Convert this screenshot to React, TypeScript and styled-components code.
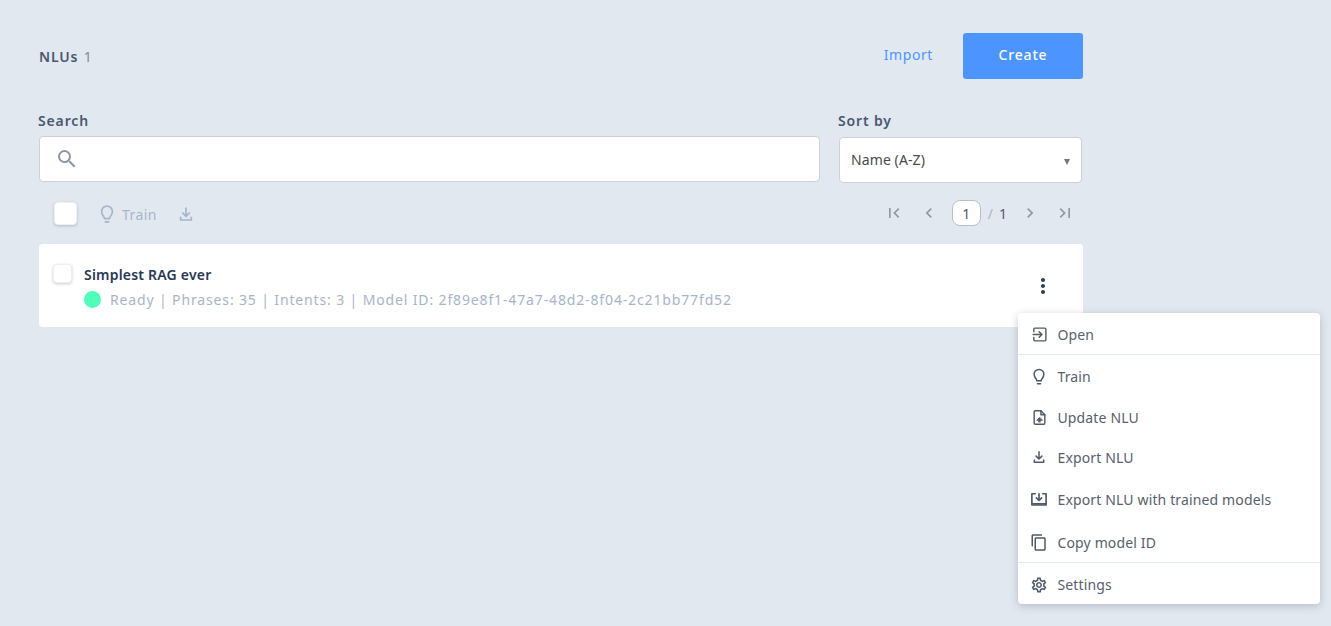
import styled, { createGlobalStyle } from "styled-components";
import {
  MdChevronLeft,
  MdChevronRight,
  MdContentCopy,
  MdFirstPage,
  MdLastPage,
  MdMoreVert,
  MdOutlineSettings,
  MdSearch,
} from "react-icons/md";

const GlobalStyle = createGlobalStyle`
  html, body {
    margin: 0;
    padding: 0;
    background: #e2e8f0;
    font-family: "Noto Sans", "Open Sans", sans-serif;
  }
  * {
    box-sizing: border-box;
  }
`;

const Page = styled.div`
  position: relative;
  width: 1331px;
  height: 626px;
  overflow: hidden;
  padding: 33px 0 0 39px;
  background: #e2e8f0;
`;

const Content = styled.div`
  width: 1044px;
  display: flex;
  flex-direction: column;
`;

const Header = styled.div`
  display: flex;
  align-items: center;
  justify-content: space-between;
  height: 46px;
`;

const Title = styled.div`
  font-size: 14px;
  font-weight: 600;
  letter-spacing: 0.85px;
  color: #4a5870;
  margin-top: 1px;
  span {
    font-weight: 400;
    color: #808a99;
    margin-left: 1px;
  }
`;

const HeaderActions = styled.div`
  display: flex;
  align-items: center;
  gap: 30px;
`;

const ImportLink = styled.a`
  font-size: 14px;
  letter-spacing: 0.6px;
  color: #4c94ff;
  margin-bottom: 4px;
`;

const CreateButton = styled.button`
  width: 120px;
  height: 46px;
  padding: 0 0 4px;
  border: none;
  border-radius: 3px;
  background: #4c94ff;
  color: #fff;
  font-family: inherit;
  font-size: 14px;
  font-weight: 500;
  letter-spacing: 0.8px;
`;

const Filters = styled.div`
  display: flex;
  gap: 19px;
  margin-top: 32px;
`;

const Field = styled.div<{ $width: number }>`
  width: ${(p) => p.$width}px;
  display: flex;
  flex-direction: column;
`;

const Label = styled.label`
  font-size: 14px;
  font-weight: 600;
  letter-spacing: 0.85px;
  line-height: 20px;
  height: 25px;
  margin-left: -1px;
  color: #4a5870;
`;

const SearchBox = styled.div`
  height: 46px;
  display: flex;
  align-items: center;
  padding-left: 15px;
  background: #fff;
  border: 1px solid #cbd0da;
  border-radius: 4px;
  color: #8c96a8;
  svg {
    width: 24px;
    height: 24px;
  }
`;

const SortBox = styled.div`
  height: 46px;
  margin-top: 1px;
  padding: 0 11px 2px 11px;
  display: flex;
  align-items: center;
  justify-content: space-between;
  background: #fff;
  border: 1px solid #cbd0da;
  border-radius: 4px;
  font-size: 14px;
  letter-spacing: 0.1px;
  color: #4a4a4a;
`;

const Caret = styled.span`
  width: 0;
  height: 0;
  margin-top: 5px;
  border-left: 3px solid transparent;
  border-right: 3px solid transparent;
  border-top: 6px solid #777;
`;

const Toolbar = styled.div`
  height: 26px;
  margin-top: 17px;
  display: flex;
  align-items: center;
  justify-content: space-between;
`;

const BulkActions = styled.div`
  display: flex;
  align-items: center;
  padding-left: 15px;
  color: #a8b4cc;
`;

const Checkbox = styled.span<{ $size: number }>`
  display: block;
  flex: none;
  width: ${(p) => p.$size}px;
  height: ${(p) => p.$size}px;
  background: #fff;
  border-radius: 4px;
  border: 1px solid #edf0f4;
  box-shadow: 0 1px 3px rgba(45, 55, 72, 0.25);
`;

const TrainAction = styled.div`
  display: flex;
  align-items: center;
  gap: 5px;
  margin-left: 20px;
  margin-top: 2px;
  font-size: 14px;
  letter-spacing: 0.4px;
  svg {
    width: 20px;
    height: 20px;
  }
`;

const DownloadAction = styled.span`
  display: flex;
  margin-left: 21px;
  margin-top: 2px;
  svg {
    width: 16px;
    height: 16px;
  }
`;

const Pager = styled.div`
  display: flex;
  align-items: center;
  padding-right: 8px;
  color: #8f99aa;
  svg {
    width: 20px;
    height: 20px;
  }
`;

const PagerIcon = styled.span<{ $gap: number }>`
  display: flex;
  margin-left: ${(p) => p.$gap}px;
`;

const PageInput = styled.span`
  width: 29px;
  height: 26px;
  margin-left: 13px;
  display: flex;
  align-items: center;
  justify-content: center;
  background: #fff;
  border: 1px solid #b6bfcc;
  border-radius: 8px;
  font-size: 14px;
  color: #4a5870;
`;

const PageTotal = styled.span`
  margin-left: 7px;
  font-size: 14px;
  color: #4a5870;
  i {
    font-style: normal;
    color: #a8b4cc;
    margin-right: 6px;
  }
`;

const Card = styled.div`
  position: relative;
  height: 83px;
  margin-top: 18px;
  padding: 20px 14px 0;
  display: flex;
  background: #fff;
  border-radius: 4px;
`;

const CardBody = styled.div`
  margin-left: 12px;
  padding-top: 1px;
  display: flex;
  flex-direction: column;
`;

const CardTitle = styled.div`
  font-size: 14px;
  font-weight: 600;
  line-height: 20px;
  letter-spacing: 0.2px;
  color: #2a3855;
`;

const CardMeta = styled.div`
  display: flex;
  align-items: center;
  gap: 9px;
  margin-top: 5px;
  font-size: 14px;
  line-height: 20px;
  letter-spacing: 0.86px;
  color: #a8b4cc;
`;

const StatusDot = styled.span`
  width: 17px;
  height: 17px;
  margin-top: -2px;
  border-radius: 50%;
  background: #4dffb8;
`;

const MoreButton = styled.span`
  position: absolute;
  top: 30px;
  right: 28px;
  display: flex;
  color: #2a3a5a;
  svg {
    width: 24px;
    height: 24px;
  }
`;

const Menu = styled.div`
  position: absolute;
  left: 1018px;
  top: 313px;
  width: 302px;
  height: 291px;
  background: #fff;
  border-radius: 4px;
  box-shadow: 0 2px 8px rgba(74, 85, 104, 0.3);
  display: flex;
  flex-direction: column;
`;

const MenuItem = styled.div<{ $height: number; $nudge?: number }>`
  height: ${(p) => p.$height}px;
  padding: ${(p) => p.$nudge ?? 0}px 0 0 12px;
  display: flex;
  align-items: center;
  gap: 9.5px;
  font-size: 14px;
  letter-spacing: 0.14px;
  color: #56616c;
`;

const MenuIcon = styled.span<{ $size: number }>`
  flex: none;
  width: 18px;
  display: flex;
  justify-content: center;
  color: #4f5b67;
  svg {
    width: ${(p) => p.$size}px;
    height: ${(p) => p.$size}px;
  }
`;

const MenuDivider = styled.div`
  height: 1px;
  flex: none;
  background: #e2e8f0;
`;

const strokeProps = {
  fill: "none",
  stroke: "currentColor",
  strokeWidth: 2,
  strokeLinecap: "round" as const,
  strokeLinejoin: "round" as const,
  viewBox: "0 0 24 24",
};

const BulbIcon = () => (
  <svg {...strokeProps}>
    <path d="M9 17.5h6M10 21.500h4" />
    <path d="M9 17c0-2-3.500-3.600-3.500-8A6.500 6.500 0 0 1 12 2.500 6.500 6.500 0 0 1 18.500 9c0 4.400-3.500 6-3.500 8" />
  </svg>
);

const DownloadIcon = () => (
  <svg {...strokeProps} strokeWidth={2.6}>
    <path d="M12 3v12M7 10.500l5 5 5-5M4 17v4h16v-4" />
  </svg>
);

const OpenIcon = () => (
  <svg {...strokeProps}>
    <path d="M4 8V4.500A1.500 1.500 0 0 1 5.500 3h14A1.500 1.500 0 0 1 21 4.500v15a1.500 1.500 0 0 1-1.500 1.500h-14A1.500 1.500 0 0 1 4 19.500V16" />
    <path d="M3 12h12M11.500 8l4 4-4 4" />
  </svg>
);

const FileUpIcon = () => (
  <svg {...strokeProps}>
    <path d="M14 2.500H6A1.500 1.500 0 0 0 4.500 4v16A1.500 1.500 0 0 0 6 21.500h12a1.500 1.500 0 0 0 1.500-1.500V8z" />
    <path d="M14 2.500V8h5.500" />
    <path d="M12 12l-4 4h2.800v2.500h2.400V16H16z" fill="currentColor" strokeWidth={1} />
  </svg>
);

const TrayDownIcon = () => (
  <svg {...strokeProps} strokeWidth={2.2}>
    <path d="M7 5H2.500v15h19V5H17" />
    <path d="M2.500 18.500h19" />
    <path d="M12 5v9M8.500 10.500l3.500 3.500 3.500-3.500" />
  </svg>
);

export default function App() {
  return (
    <Page>
      <GlobalStyle />
      <Content>
        <Header>
          <Title>
            NLUs <span>1</span>
          </Title>
          <HeaderActions>
            <ImportLink>Import</ImportLink>
            <CreateButton>Create</CreateButton>
          </HeaderActions>
        </Header>
        <Filters>
          <Field $width={781}>
            <Label>Search</Label>
            <SearchBox>
              <MdSearch />
            </SearchBox>
          </Field>
          <Field $width={243}>
            <Label>Sort by</Label>
            <SortBox>
              Name (A-Z)
              <Caret />
            </SortBox>
          </Field>
        </Filters>
        <Toolbar>
          <BulkActions>
            <Checkbox $size={23} />
            <TrainAction>
              <BulbIcon />
              Train
            </TrainAction>
            <DownloadAction>
              <DownloadIcon />
            </DownloadAction>
          </BulkActions>
          <Pager>
            <PagerIcon $gap={0}>
              <MdFirstPage />
            </PagerIcon>
            <PagerIcon $gap={15}>
              <MdChevronLeft />
            </PagerIcon>
            <PageInput>1</PageInput>
            <PageTotal>
              <i>/</i>1
            </PageTotal>
            <PagerIcon $gap={13}>
              <MdChevronRight />
            </PagerIcon>
            <PagerIcon $gap={15}>
              <MdLastPage />
            </PagerIcon>
          </Pager>
        </Toolbar>
        <Card>
          <Checkbox $size={19} />
          <CardBody>
            <CardTitle>Simplest RAG ever</CardTitle>
            <CardMeta>
              <StatusDot />
              Ready | Phrases: 35 | Intents: 3 | Model ID: 2f89e8f1-47a7-48d2-8f04-2c21bb77fd52
            </CardMeta>
          </CardBody>
          <MoreButton>
            <MdMoreVert />
          </MoreButton>
        </Card>
      </Content>
      <Menu>
        <MenuItem $height={41} $nudge={2}>
          <MenuIcon $size={17}>
            <OpenIcon />
          </MenuIcon>
          Open
        </MenuItem>
        <MenuDivider />
        <MenuItem $height={42}>
          <MenuIcon $size={19}>
            <BulbIcon />
          </MenuIcon>
          Train
        </MenuItem>
        <MenuItem $height={41}>
          <MenuIcon $size={17}>
            <FileUpIcon />
          </MenuIcon>
          Update NLU
        </MenuItem>
        <MenuItem $height={38}>
          <MenuIcon $size={14}>
            <DownloadIcon />
          </MenuIcon>
          Export NLU
        </MenuItem>
        <MenuItem $height={46}>
          <MenuIcon $size={20}>
            <TrayDownIcon />
          </MenuIcon>
          Export NLU with trained models
        </MenuItem>
        <MenuItem $height={40}>
          <MenuIcon $size={19}>
            <MdContentCopy />
          </MenuIcon>
          Copy model ID
        </MenuItem>
        <MenuDivider />
        <MenuItem $height={41} $nudge={2}>
          <MenuIcon $size={18}>
            <MdOutlineSettings />
          </MenuIcon>
          Settings
        </MenuItem>
      </Menu>
    </Page>
  );
}
